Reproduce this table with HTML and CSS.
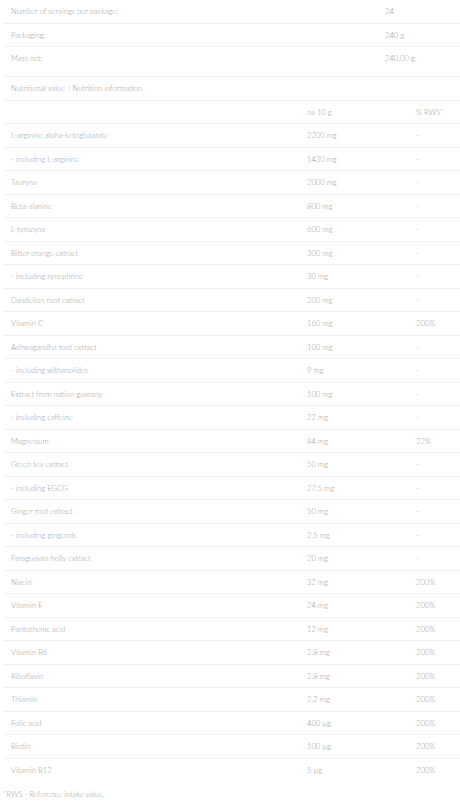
FILE: index.html
```html
<!DOCTYPE html>
<html>
<head>
<meta charset="utf-8">
<link rel="stylesheet" href="styles.css">
</head>
<body>
<div class="wrap">
  <div class="info">
    <div class="row"><div class="c">Number of servings per package:</div><div class="c">24</div></div>
    <div class="row"><div class="c">Packaging:</div><div class="c">240 g</div></div>
    <div class="row last"><div class="c">Mass net:</div><div class="c">240.00 g</div></div>
  </div>
  <div class="nut">
    <div class="row title"><div class="c">Nutritional value / Nutrition information</div></div>
    <div class="row"><div class="c"></div><div class="c">na 10 g</div><div class="c">% RWS*</div></div>
    <div class="row"><div class="c">L-arginine alpha-ketoglutarate</div><div class="c">2200 mg</div><div class="c">-</div></div>
    <div class="row"><div class="c">- including L-arginine</div><div class="c">1430 mg</div><div class="c">-</div></div>
    <div class="row"><div class="c">Tauryna</div><div class="c">2000 mg</div><div class="c">-</div></div>
    <div class="row"><div class="c">Beta-alanine</div><div class="c">800 mg</div><div class="c">-</div></div>
    <div class="row"><div class="c">L-tyrozyna</div><div class="c">600 mg</div><div class="c">-</div></div>
    <div class="row"><div class="c">Bitter orange extract</div><div class="c">300 mg</div><div class="c">-</div></div>
    <div class="row"><div class="c">- including synephrine</div><div class="c">30 mg</div><div class="c">-</div></div>
    <div class="row"><div class="c">Dandelion root extract</div><div class="c">200 mg</div><div class="c">-</div></div>
    <div class="row"><div class="c">Vitamin C</div><div class="c">160 mg</div><div class="c">200%</div></div>
    <div class="row"><div class="c">Ashwagandha root extract</div><div class="c">100 mg</div><div class="c">-</div></div>
    <div class="row"><div class="c">- including withanolides</div><div class="c">9 mg</div><div class="c">-</div></div>
    <div class="row"><div class="c">Extract from nation guarany</div><div class="c">100 mg</div><div class="c">-</div></div>
    <div class="row"><div class="c">- including caffeine</div><div class="c">22 mg</div><div class="c">-</div></div>
    <div class="row"><div class="c">Magnesium</div><div class="c">84 mg</div><div class="c">22%</div></div>
    <div class="row"><div class="c">Green tea extract</div><div class="c">50 mg</div><div class="c">-</div></div>
    <div class="row"><div class="c">- including EGCG</div><div class="c">27.5 mg</div><div class="c">-</div></div>
    <div class="row"><div class="c">Ginger root extract</div><div class="c">50 mg</div><div class="c">-</div></div>
    <div class="row"><div class="c">- including gingerols</div><div class="c">2.5 mg</div><div class="c">-</div></div>
    <div class="row"><div class="c">Paraguayan holly extract</div><div class="c">20 mg</div><div class="c">-</div></div>
    <div class="row"><div class="c">Niacin</div><div class="c">32 mg</div><div class="c">200%</div></div>
    <div class="row"><div class="c">Vitamin E</div><div class="c">24 mg</div><div class="c">200%</div></div>
    <div class="row"><div class="c">Pantothenic acid</div><div class="c">12 mg</div><div class="c">200%</div></div>
    <div class="row"><div class="c">Vitamin B6</div><div class="c">2.8 mg</div><div class="c">200%</div></div>
    <div class="row"><div class="c">Riboflavin</div><div class="c">2.8 mg</div><div class="c">200%</div></div>
    <div class="row"><div class="c">Thiamin</div><div class="c">2.2 mg</div><div class="c">200%</div></div>
    <div class="row"><div class="c">Folic acid</div><div class="c">400 µg</div><div class="c">200%</div></div>
    <div class="row"><div class="c">Biotin</div><div class="c">100 µg</div><div class="c">200%</div></div>
    <div class="row"><div class="c">Vitamin B12</div><div class="c">5 µg</div><div class="c">200%</div></div>
  </div>
  <div class="note">*RWS - Reference intake value.</div>
</div>
</body>
</html>
```
FILE: styles.css
```css
html, body {
  margin: 0;
  padding: 0;
  background: #fff;
}
body {
  font-family: "Lato", "Open Sans", sans-serif;
  font-weight: 300;
  font-size: 7.6px;
  color: #9c9c9c;
}
.wrap {
  padding: 0 0 0 4px;
}
.row {
  display: grid;
  align-items: center;
  height: 23.5px;
  box-sizing: border-box;
  border-top: 1px solid #f0f0f0;
}
.info .row:first-child {
  border-top: none;
  height: 22.5px;
}
.info .row {
  grid-template-columns: 374px 1fr;
}
.info .row.last {
  height: 30px;
  align-items: start;
  padding-top: 6px;
}
.nut .row {
  grid-template-columns: 296px 109px 1fr;
}
.nut .row.title {
  grid-template-columns: 1fr;
}
.c {
  padding-left: 7px;
  white-space: nowrap;
}
.note {
  padding: 8px 0 0 0;
  margin-left: -1px;
}
```
